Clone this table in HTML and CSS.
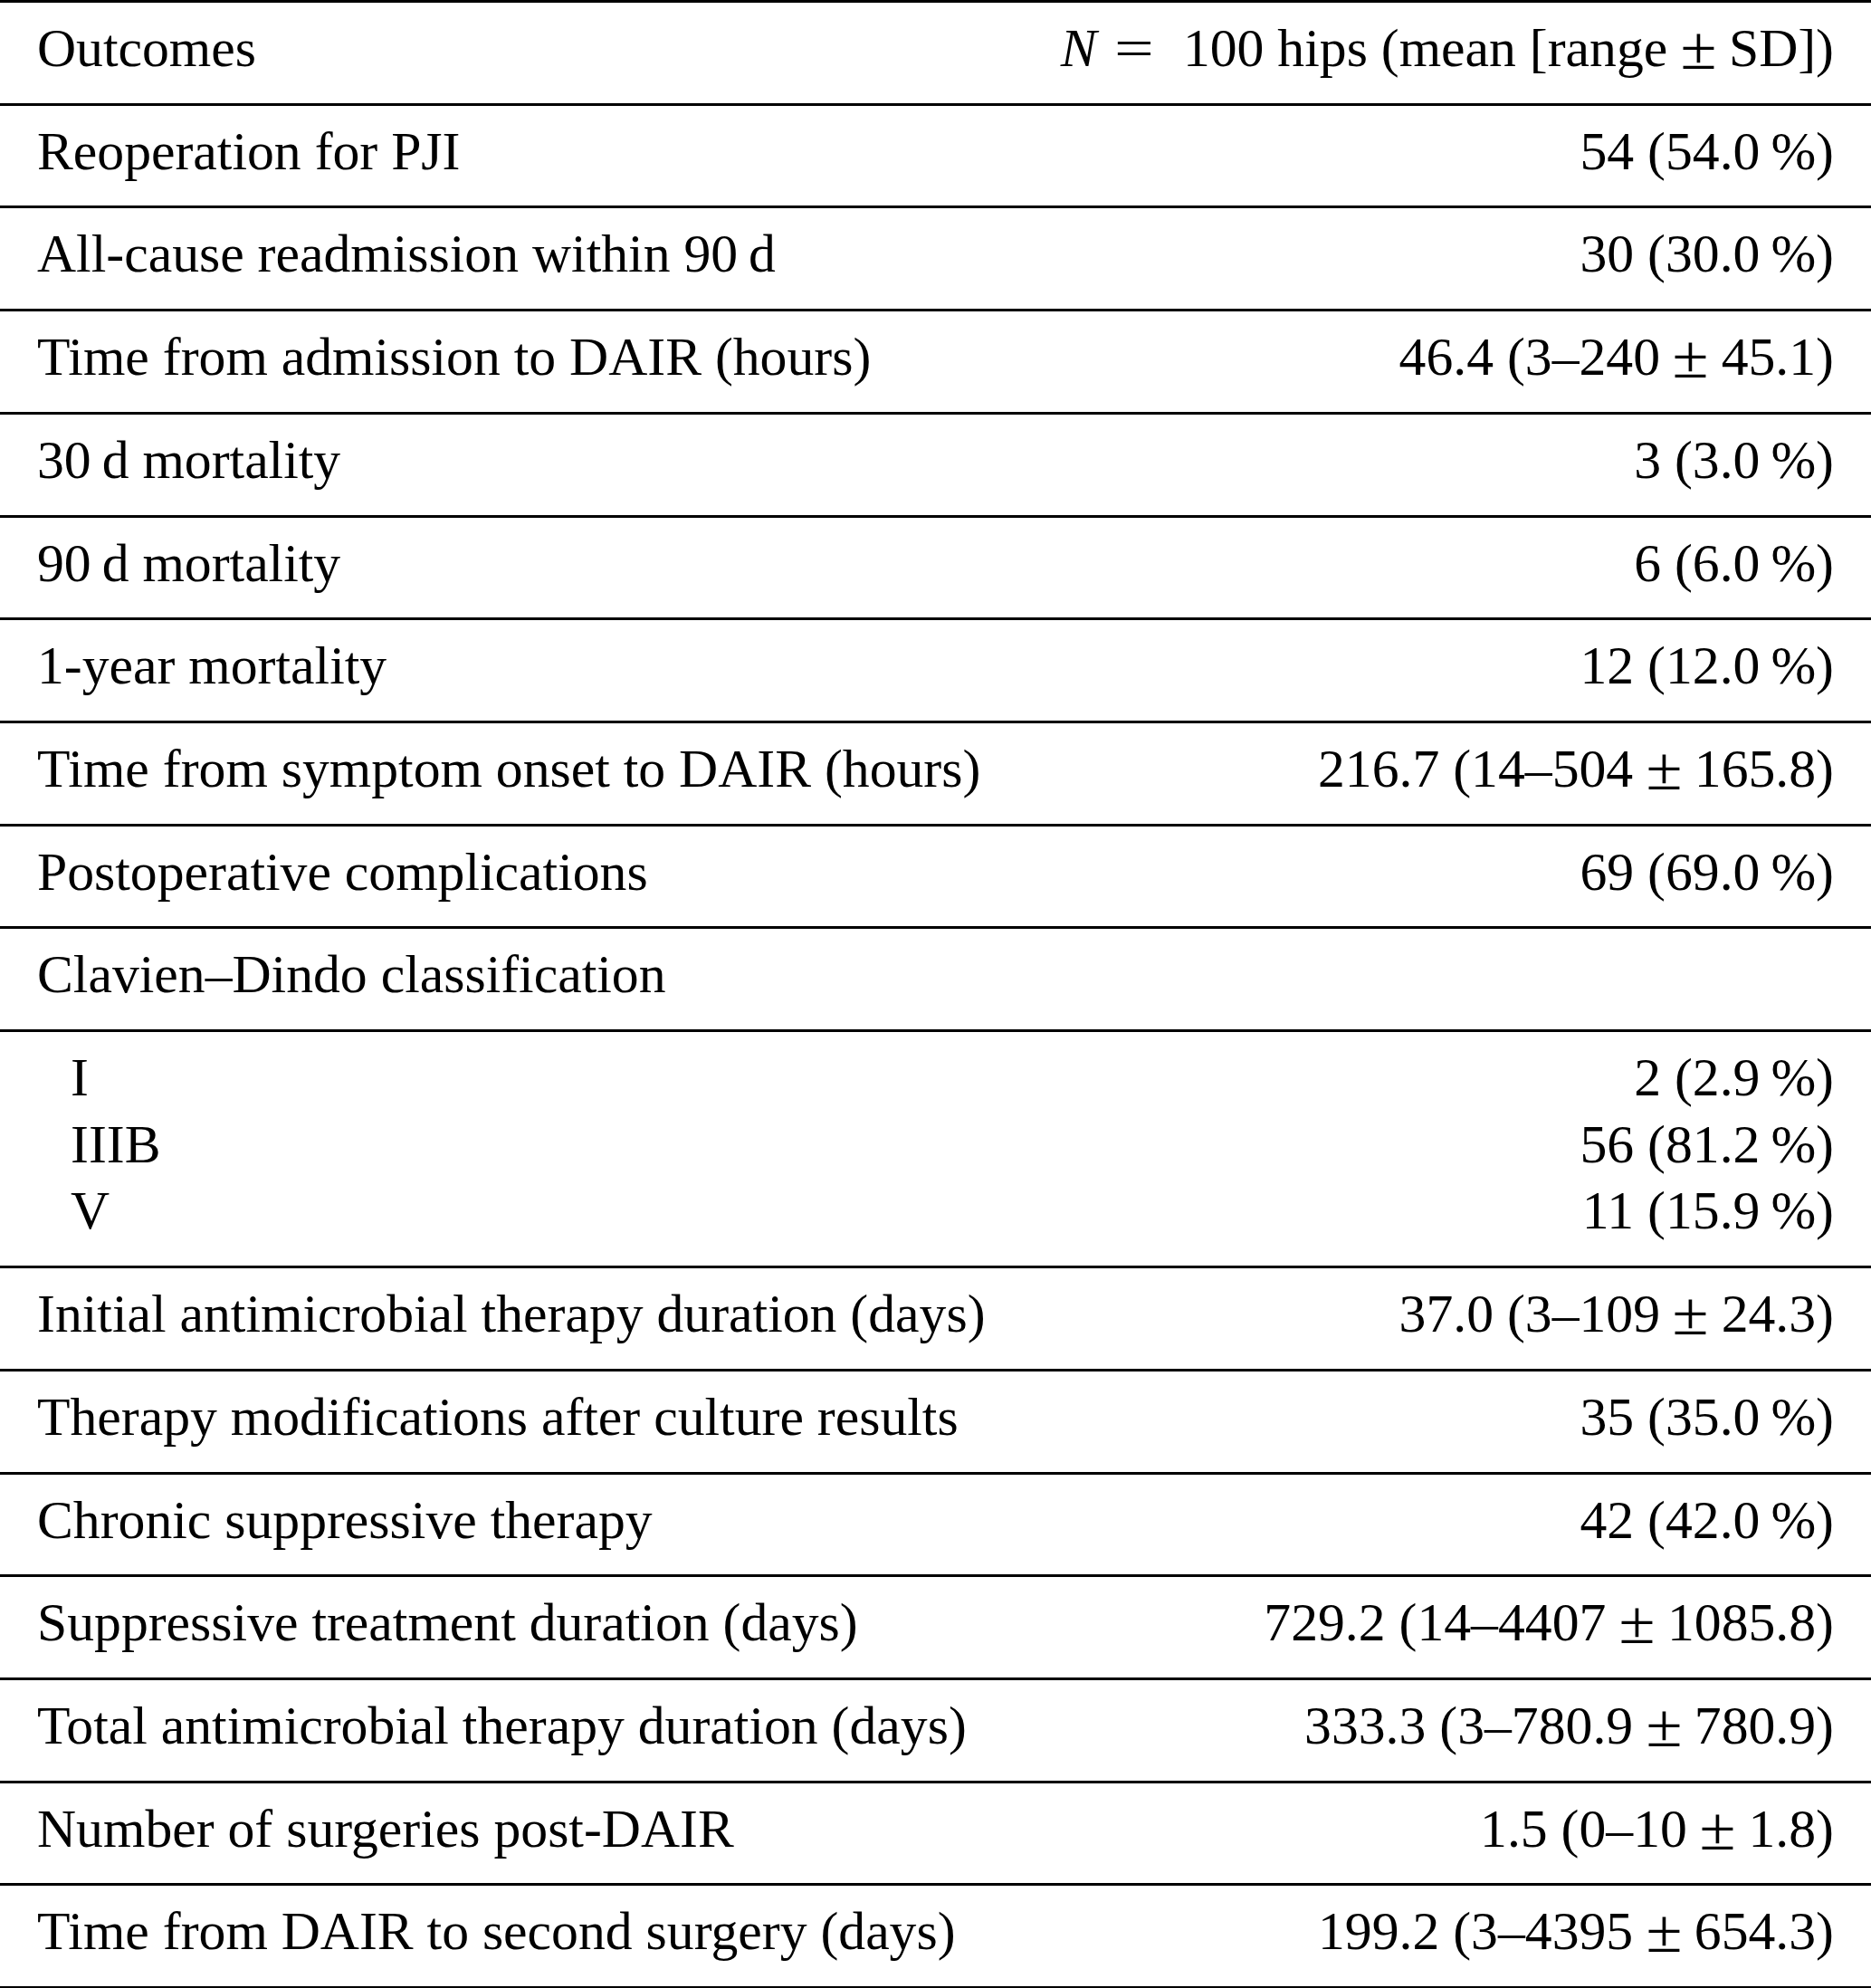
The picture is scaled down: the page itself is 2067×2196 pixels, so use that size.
FILE: index.html
```html
<!DOCTYPE html>
<html lang="en">
<head>
<meta charset="utf-8">
<title>Outcomes</title>
<link rel="stylesheet" href="styles.css">
</head>
<body>
<table class="outcomes">
  <thead>
    <tr>
      <th class="label">Outcomes</th>
      <th class="value"><i>N</i> <span class="eq">=</span>&nbsp; 100 hips (mean [range&thinsp;<span class="pm">±</span>&thinsp;SD])</th>
    </tr>
  </thead>
  <tbody>
    <tr><td class="label">Reoperation for PJI</td><td class="value">54 (54.0&thinsp;%)</td></tr>
    <tr><td class="label">All-cause readmission within 90&thinsp;d</td><td class="value">30 (30.0&thinsp;%)</td></tr>
    <tr><td class="label">Time from admission to DAIR (hours)</td><td class="value">46.4 (3–240&thinsp;<span class="pm">±</span>&thinsp;45.1)</td></tr>
    <tr><td class="label">30&thinsp;d mortality</td><td class="value">3 (3.0&thinsp;%)</td></tr>
    <tr><td class="label">90&thinsp;d mortality</td><td class="value">6 (6.0&thinsp;%)</td></tr>
    <tr><td class="label">1-year mortality</td><td class="value">12 (12.0&thinsp;%)</td></tr>
    <tr><td class="label">Time from symptom onset to DAIR (hours)</td><td class="value">216.7 (14–504&thinsp;<span class="pm">±</span>&thinsp;165.8)</td></tr>
    <tr><td class="label">Postoperative complications</td><td class="value">69 (69.0&thinsp;%)</td></tr>
    <tr><td class="label">Clavien–Dindo classification</td><td class="value"></td></tr>
    <tr>
      <td class="label"><div class="sub">I</div><div class="sub">IIIB</div><div class="sub">V</div></td>
      <td class="value"><div>2 (2.9&thinsp;%)</div><div>56 (81.2&thinsp;%)</div><div>11 (15.9&thinsp;%)</div></td>
    </tr>
    <tr><td class="label">Initial antimicrobial therapy duration (days)</td><td class="value">37.0 (3–109&thinsp;<span class="pm">±</span>&thinsp;24.3)</td></tr>
    <tr><td class="label">Therapy modifications after culture results</td><td class="value">35 (35.0&thinsp;%)</td></tr>
    <tr><td class="label">Chronic suppressive therapy</td><td class="value">42 (42.0&thinsp;%)</td></tr>
    <tr><td class="label">Suppressive treatment duration (days)</td><td class="value">729.2 (14–4407&thinsp;<span class="pm">±</span>&thinsp;1085.8)</td></tr>
    <tr><td class="label">Total antimicrobial therapy duration (days)</td><td class="value">333.3 (3–780.9&thinsp;<span class="pm">±</span>&thinsp;780.9)</td></tr>
    <tr><td class="label">Number of surgeries post-DAIR</td><td class="value">1.5 (0–10&thinsp;<span class="pm">±</span>&thinsp;1.8)</td></tr>
    <tr><td class="label">Time from DAIR to second surgery (days)</td><td class="value">199.2 (3–4395&thinsp;<span class="pm">±</span>&thinsp;654.3)</td></tr>
  </tbody>
</table>
</body>
</html>
```
FILE: styles.css
```css
html, body {
  margin: 0;
  padding: 0;
  background: #ffffff;
}

body {
  font-family: "Liberation Serif", "Times New Roman", serif;
  font-size: 59.7px;
  color: #000000;
}

.outcomes {
  width: 100%;
  border-collapse: collapse;
  border-top: 3px solid #000;
}

.outcomes th,
.outcomes td {
  font-weight: normal;
  line-height: 73.7px;
  padding: 14px 0 23px 0;
  border-bottom: 3px solid #000;
  white-space: nowrap;
  vertical-align: top;
}

.outcomes .label {
  text-align: left;
  padding-left: 41px;
}

.outcomes .value {
  text-align: right;
  padding-right: 41px;
}

.outcomes .sub {
  padding-left: 37px;
}

.outcomes .eq {
  display: inline-block;
  transform: scaleX(1.3);
  margin: 0 7px 0 10px;
}

.outcomes .pm {
  display: inline-block;
  transform: scale(1.22, 1.15);
  margin: 0 5.5px;
}
```
